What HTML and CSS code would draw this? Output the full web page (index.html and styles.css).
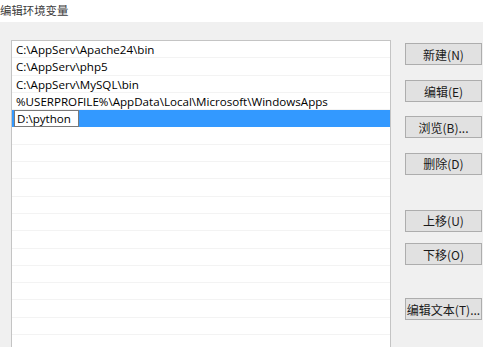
FILE: index.html
```html
<!DOCTYPE html>
<html>
<head>
<meta charset="utf-8">
<link rel="stylesheet" href="styles.css">
</head>
<body>
<div class="titlebar"><span class="title">编辑环境变量</span></div>
<div class="main">
  <div class="list">
    <div class="row">C:\AppServ\Apache24\bin</div>
    <div class="row">C:\AppServ\php5</div>
    <div class="row">C:\AppServ\MySQL\bin</div>
    <div class="row">%USERPROFILE%\AppData\Local\Microsoft\WindowsApps</div>
    <div class="row selected"><span class="editbox">D:\python</span></div>
    <div class="row"></div>
    <div class="row"></div>
    <div class="row"></div>
    <div class="row"></div>
    <div class="row"></div>
    <div class="row"></div>
    <div class="row"></div>
    <div class="row"></div>
    <div class="row"></div>
    <div class="row"></div>
    <div class="row"></div>
    <div class="row"></div>
    <div class="row"></div>
  </div>
  <div class="buttons">
    <div class="btn b1">新建(N)</div>
    <div class="btn b2">编辑(E)</div>
    <div class="btn b3">浏览(B)...</div>
    <div class="btn b4">删除(D)</div>
    <div class="btn b5">上移(U)</div>
    <div class="btn b6">下移(O)</div>
    <div class="btn b7">编辑文本(T)...</div>
  </div>
</div>
</body>
</html>
```
FILE: styles.css
```css
html, body {
  margin: 0;
  padding: 0;
  background: #f0f0f0;
  width: 483px;
  height: 347px;
  overflow: hidden;
  font-family: "Open Sans", "Noto Sans CJK SC", sans-serif;
}
.titlebar {
  height: 22px;
  background: #ffffff;
  display: flex;
  align-items: center;
}
.title {
  font-family: "Noto Sans CJK SC", sans-serif;
  font-size: 11.4px;
  color: #3c3c3c;
  line-height: 16px;
  margin-top: -2px;
}
.main {
  display: flex;
  padding-top: 18px;
  padding-left: 11px;
}
.list {
  width: 378px;
  height: 320px;
  background: #ffffff;
  border: 1px solid #c4c4c4;
  overflow: hidden;
  flex: none;
}
.row {
  height: 17.3px;
  box-sizing: border-box;
  border-bottom: 1px solid #f3f3f3;
  font-size: 11.6px;
  line-height: 17px;
  color: #000;
  padding-left: 4px;
  white-space: nowrap;
}
.row.selected {
  background: #3399ff;
  padding-left: 2px;
  border-bottom: none;
}
.editbox {
  display: inline-block;
  box-sizing: border-box;
  width: 65px;
  height: 17px;
  background: #fff;
  border: 1px solid #7a7a7a;
  padding-left: 2px;
  line-height: 15px;
  vertical-align: top;
}
.buttons {
  display: flex;
  flex-direction: column;
  margin-left: 14px;
  margin-top: 3px;
}
.btn {
  width: 77px;
  height: 22px;
  box-sizing: border-box;
  background: #e1e1e1;
  border: 1px solid #adadad;
  font-family: "Noto Sans CJK SC", sans-serif;
  font-size: 12px;
  color: #1a1a1a;
  display: flex;
  align-items: center;
  justify-content: center;
}
.b2 { margin-top: 15px; }
.b3 { margin-top: 14px; }
.b4 { margin-top: 14.7px; }
.b5 { margin-top: 35.3px; }
.b6 { margin-top: 11.3px; }
.b7 { margin-top: 33px; }
```
